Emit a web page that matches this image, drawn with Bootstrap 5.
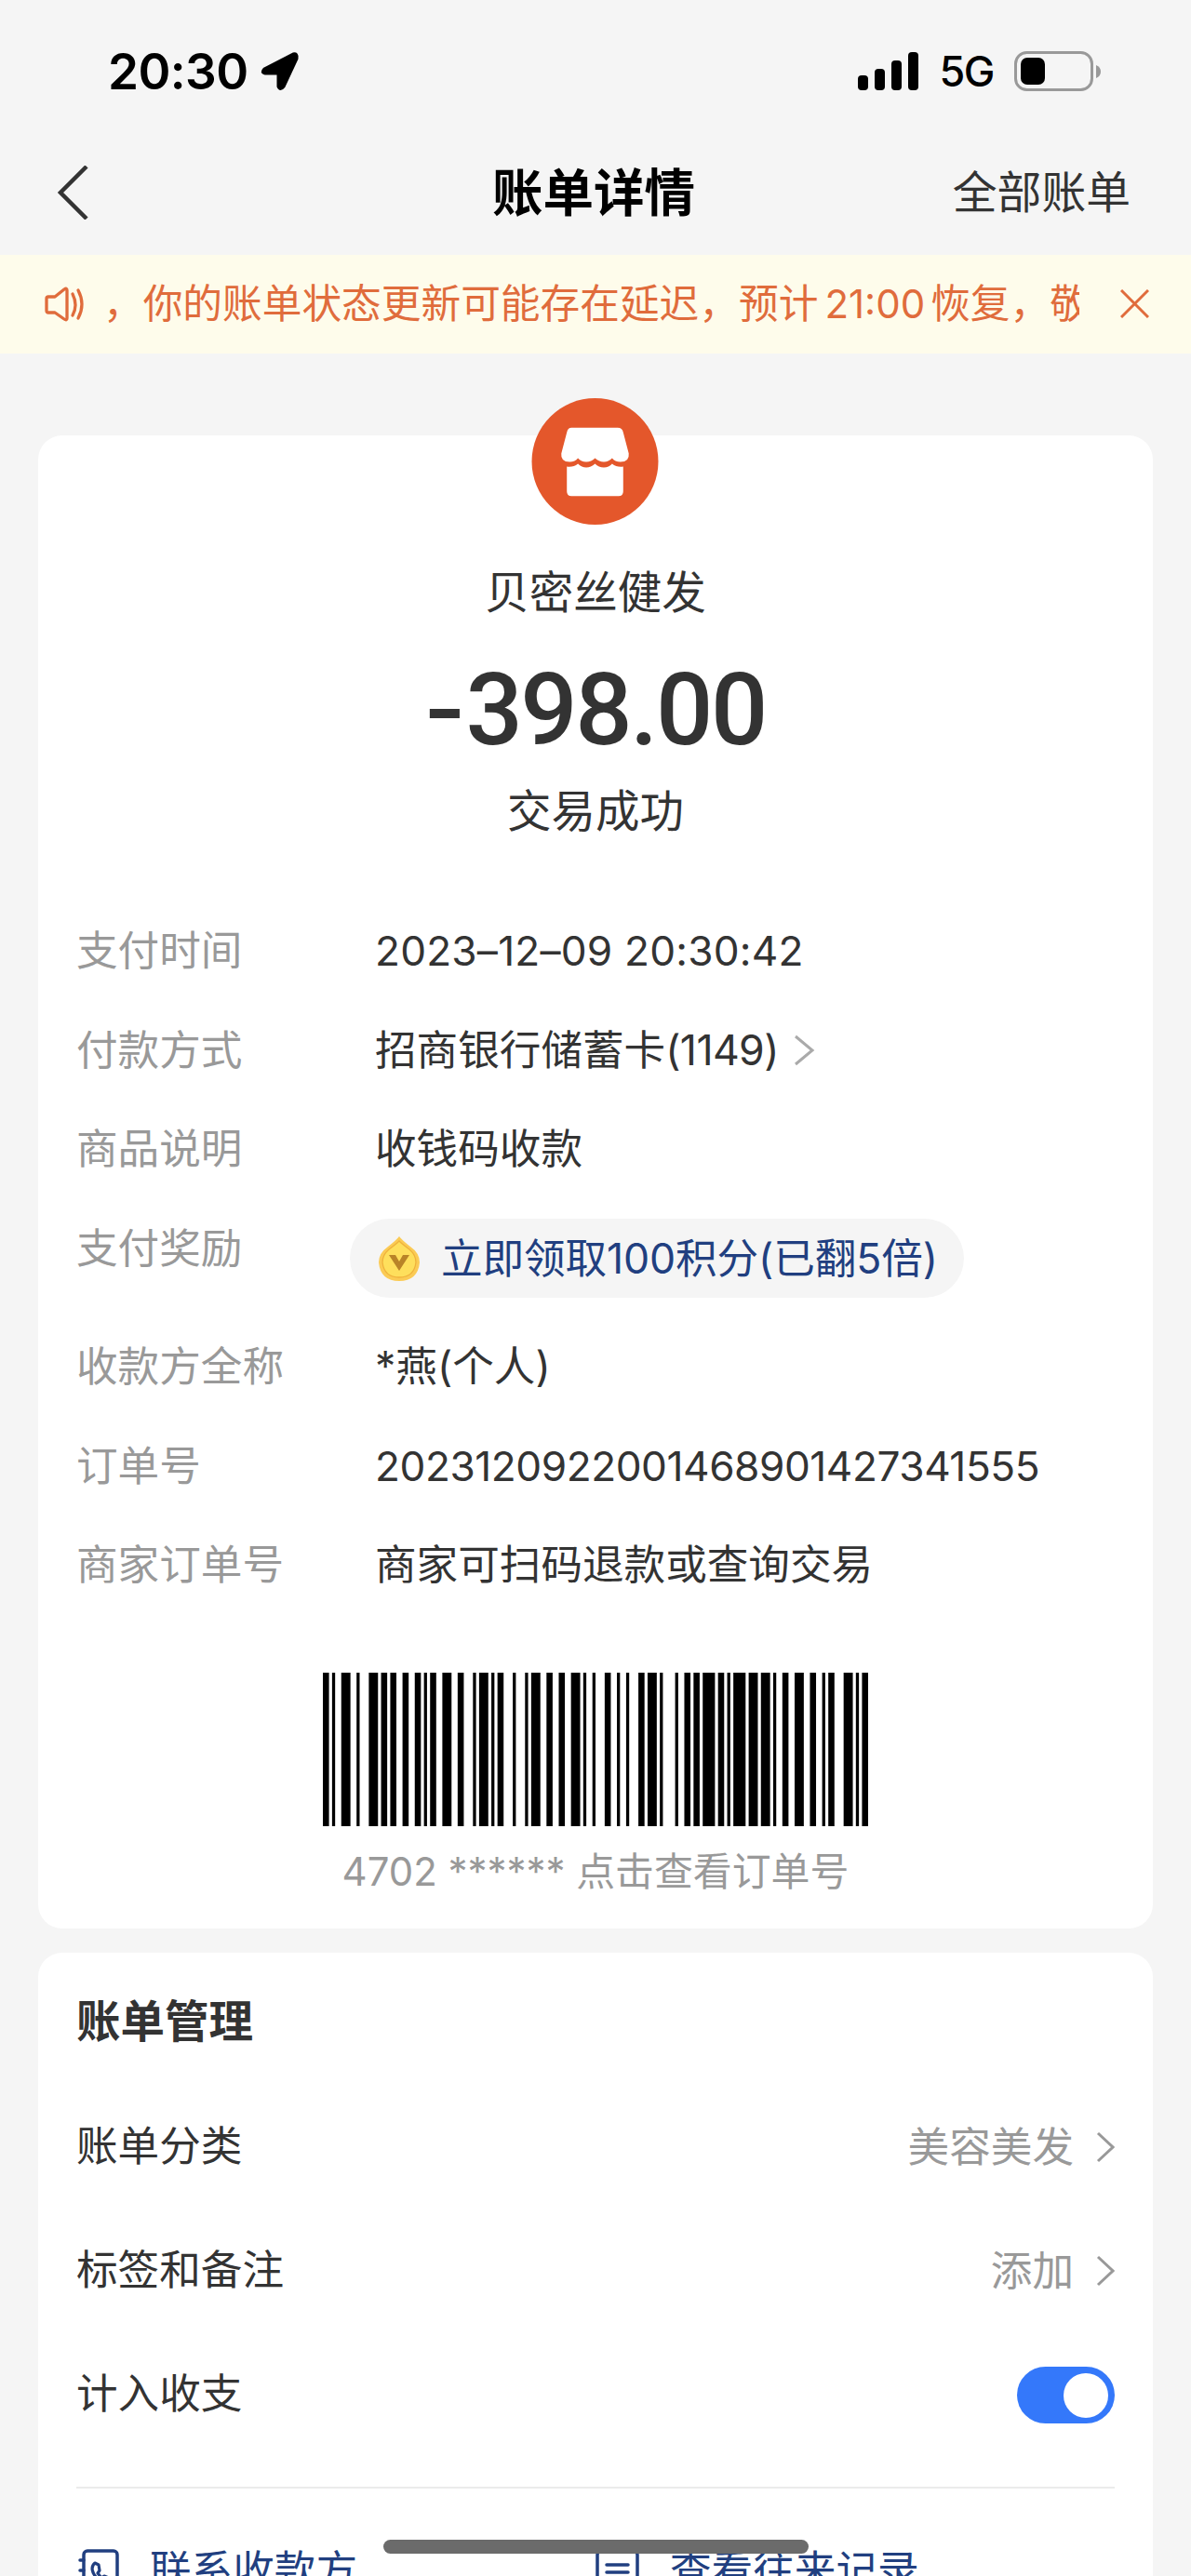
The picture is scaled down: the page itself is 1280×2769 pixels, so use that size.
<!DOCTYPE html>
<html lang="zh-CN">
<head>
<meta charset="utf-8">
<meta name="viewport" content="width=device-width, initial-scale=1">
<title>账单详情</title>
<link rel="stylesheet" href="https://cdn.jsdelivr.net/npm/bootstrap@5.3.0/dist/css/bootstrap.min.css">
<style>
  html, body { height: 2769px; overflow: hidden; }
  body { background: #f5f5f5; color: #333; font-family: Inter, "Noto Sans CJK SC", sans-serif; font-size: 44.6px; line-height: 60px; }
  svg { display: block; flex: none; }
  .screen { width: 1280px; height: 2769px; }
  .status-bar { height: 154px; padding: 0 97px 0 116px; color: #000; }
  .clock { font-size: 53px; font-weight: 600; letter-spacing: -.6px; }
  .locate { margin-left: 12px; }
  .carrier { font-size: 45px; font-weight: 500; letter-spacing: -1.5px; margin-left: 22px; }
  .battery { margin-left: 22px; }
  .title-bar { height: 120px; padding: 0 65px 15px 61px; }
  .title-bar > * { flex: 1 1 0; }
  .page-title { font-size: 54.5px; font-weight: 700; color: #000; }
  .all-bills { font-size: 47.8px; text-align: right; }
  .notice { height: 106px; background: #fefceb; color: #e06c3c; padding: 0 45px 1px 48px; font-size: 42.7px; }
  .notice-text { width: 1049px; white-space: nowrap; overflow: hidden; }
  .notice-text span { font-size: 42px; margin: 0 6px 0 7px; }
  .panel { margin: 0 41px; background: #fff; border-radius: 26px; }
  .bill { margin-top: 88px; height: 1605px; }
  .shop { margin: -40px 2px 0 0; }
  .merchant { font-size: 47.5px; margin-top: 43px; }
  .amount { font-family: Roboto, sans-serif; font-weight: 500; font-size: 108px; line-height: 120px; margin-top: 36px; letter-spacing: -2.4px; }
  .minus { display: inline-block; transform: scaleX(1.15); transform-origin: left; margin-right: 9px; }
  .state { font-size: 47.5px; margin-top: 19px; }
  .details { margin: 90px 0 0 41px; }
  .detail { height: 106.7px; }
  .detail dt { width: 321px; font-weight: 400; color: #999; }
  .detail dd { margin: 0; }
  .date-num { font-size: 44.2px; letter-spacing: .2px; }
  .order-num { font-size: 44.2px; letter-spacing: -.45px; }
  .card-tail { letter-spacing: -.6px; }
  .reward-row { height: 127px; }
  .detail .reward { height: 85px; margin: -2px 0 0 -27px; padding: 0 28px 0 31px; background: #f5f5f5; color: #213f80; border-radius: 43px; }
  .reward-label { margin-left: 23px; letter-spacing: -.1px; }
  .barcode { margin-top: 39px; }
  .barcode-text { font-size: 41.9px; color: #999; margin-top: 19px; }
  .manage { margin-top: 26px; height: 700px; padding: 44px 41px 0 41px; }
  .manage-title { font-size: 47.5px; font-weight: 700; margin: 0 0 37px; line-height: 60px; }
  .setting { height: 133.3px; }
  .setting-value { color: #999; padding-top: 3px; }
  .setting-value svg { margin-left: 24px; }
  .form-switch .form-check-input.count-switch { width: 105px; height: 61px; margin: 2px 0 0; border: 0; background-color: #3478fa; box-shadow: none; background-size: 64px; background-position: 42px -1px; }
  .links { border-top: 2px solid #ebebeb; margin-top: 33px; padding-top: 58px; color: #213f80; }
  .link-label { margin-left: 33px; white-space: nowrap; }
  .home-indicator { position: fixed; left: 412px; top: 2730px; width: 457px; height: 15px; border-radius: 8px; background: #6b6b6b; }
</style>
</head>
<body>
<div class="screen d-flex flex-column overflow-hidden">
  <header class="status-bar d-flex align-items-center justify-content-between flex-shrink-0">
    <div class="d-flex align-items-center">
      <span class="clock">20:30</span>
      <svg class="locate" width="44" height="44" viewBox="0 0 44 44"><path d="M5 19 36 3Q41 2 40 8L26 38Q22 43 20 38V24H6Q1 23 5 19Z" stroke="#000" stroke-width="3" stroke-linejoin="round"/></svg>
    </div>
    <div class="d-flex align-items-center">
      <svg width="66" height="42" viewBox="0 0 66 42"><rect y="25" width="11" height="16" rx="4"/><rect x="18" y="18" width="11" height="23" rx="4"/><rect x="36" y="9" width="11" height="32" rx="4"/><rect x="54" width="11" height="41" rx="4"/></svg>
      <span class="carrier">5G</span>
      <svg class="battery" width="93" height="44" viewBox="0 0 93 44"><rect x="1.500" y="1.500" width="82" height="40" rx="12" fill="none" stroke="#999" stroke-width="3"/><rect x="7" y="7" width="26" height="29" rx="7"/><path d="M88 15q5 2 5 7t-5 7z" fill="#999"/></svg>
    </div>
  </header>

  <nav class="title-bar d-flex align-items-center flex-shrink-0">
    <div><svg width="34" height="58" viewBox="0 0 34 58"><path d="M32 1 4 29 32 57" fill="none" stroke="#333" stroke-width="4.500"/></svg></div>
    <div class="page-title text-center text-nowrap">账单详情</div>
    <div class="all-bills">全部账单</div>
  </nav>

  <div class="notice d-flex align-items-center flex-shrink-0">
    <svg width="63" height="40" viewBox="0 0 63 40" fill="none" stroke="#e06c3c" stroke-width="3.300" stroke-linecap="round" stroke-linejoin="round"><path d="M4 12h7L21 4q3-2 3 1v30q0 3-3 1L11 29H4q-2 0-2-2V14q0-2 2-2z"/><path d="M30 9q6 12 0 23M36 5q8 15 0 30"/></svg>
    <div class="notice-text">，你的账单状态更新可能存在延迟，预计<span>21:00</span>恢复，敬</div>
    <svg class="ms-auto" width="31" height="31" viewBox="0 0 31 31"><path d="M1 1 30 30M30 1 1 30" stroke="#e06c3c" stroke-width="3"/></svg>
  </div>

  <main>
    <section class="panel bill d-flex flex-column">
      <svg class="shop align-self-center" width="137" height="136" viewBox="0 0 137 137"><circle cx="68.500" cy="68.500" r="68.500" fill="#e4572b"/><path fill="#fff" d="M44 32h49q5 0 6 5l6 23q1 9-9 9-6 0-9-4-4 4-9 4t-9.500-4q-4 4-9.500 4t-9-4q-3 4-9 4-10 0-9-9l6-23q1-5 5-5z"/><path fill="#fff" d="M38 74q7 1 12-3 4 4 9 4t9.500-4q4 4 9.500 4t9-4q5 4 12 3v27q0 5-5 5H43q-5 0-5-5z"/></svg>
      <div class="merchant text-center">贝密丝健发</div>
      <div class="amount text-center"><span class="minus">-</span>398.00</div>
      <div class="state text-center">交易成功</div>

      <dl class="details mb-0">
        <div class="detail d-flex"><dt>支付时间</dt><dd class="date-num">2023–12–09 20:30:42</dd></div>
        <div class="detail d-flex"><dt>付款方式</dt><dd class="d-flex align-items-center align-self-start">招商银行储蓄卡<span class="card-tail">(1149)</span><svg class="ms-3" width="23" height="34" viewBox="0 0 23 34"><path d="M2 2 20 17 2 32" fill="none" stroke="#aaa" stroke-width="3"/></svg></dd></div>
        <div class="detail d-flex"><dt>商品说明</dt><dd>收钱码收款</dd></div>
        <div class="detail reward-row d-flex"><dt>支付奖励</dt>
          <dd class="reward d-flex align-items-center">
            <svg width="44" height="50" viewBox="0 0 44 50"><path d="M22 1Q25 5 34 12 44 19 44 29 42 49 22 49 2 49 0 29 0 19 10 12 19 5 22 1z" fill="#fbcb55"/><path d="M22 6Q25 9 33 15 40 21 40 29 38 45 22 45 6 45 4 29 4 21 11 15 19 9 22 6z" fill="#fedf5c" stroke="#efb23c" stroke-width="1.300"/><path d="M11 21h7l4 7 4-7h7L22 38z" fill="#b98428"/></svg>
            <span class="reward-label">立即领取100积分(已翻5倍)</span>
          </dd></div>
        <div class="detail d-flex"><dt>收款方全称</dt><dd>*燕(个人)</dd></div>
        <div class="detail d-flex"><dt>订单号</dt><dd class="order-num">2023120922001468901427341555</dd></div>
        <div class="detail d-flex"><dt>商家订单号</dt><dd>商家可扫码退款或查询交易</dd></div>
      </dl>

      <svg id="barcode" class="barcode align-self-center" width="586" height="165" viewBox="0 0 178 10" preserveAspectRatio="none"><path/></svg>
      <div class="barcode-text text-center">4702 ****** 点击查看订单号</div>
    </section>

    <section class="panel manage">
      <h2 class="manage-title">账单管理</h2>
      <div class="setting d-flex align-items-center justify-content-between"><span>账单分类</span><span class="setting-value d-flex align-items-center">美容美发<svg width="20" height="34" viewBox="0 0 20 34"><path d="M2 2 18 17 2 32" fill="none" stroke="#999" stroke-width="3"/></svg></span></div>
      <div class="setting d-flex align-items-center justify-content-between"><span>标签和备注</span><span class="setting-value d-flex align-items-center">添加<svg width="20" height="34" viewBox="0 0 20 34"><path d="M2 2 18 17 2 32" fill="none" stroke="#999" stroke-width="3"/></svg></span></div>
      <div class="setting d-flex align-items-center justify-content-between"><span>计入收支</span><div class="form-check form-switch p-0 m-0 d-flex"><input class="form-check-input count-switch" type="checkbox" role="switch" checked aria-label="计入收支"></div></div>
      <div class="links row gx-0">
        <div class="col-6 d-flex align-items-center">
          <svg width="46" height="50" viewBox="0 0 46 50" fill="none" stroke="#213f80" stroke-width="3.500" stroke-linecap="round" stroke-linejoin="round"><rect x="8" y="4" width="36" height="44" rx="4"/><path d="M4 14h4M4 25h4M4 36h4"/><path d="M20 17c-5 4-3 11 2 16s10 7 14 3l-1-3-5-2-3 2-4-5 2-3-1-6z" stroke-width="3.200"/></svg>
          <span class="link-label">联系收款方</span>
        </div>
        <div class="col-6 d-flex align-items-center">
          <svg width="47" height="50" viewBox="0 0 47 50" fill="none" stroke="#213f80" stroke-width="3.500" stroke-linecap="round"><rect x="2" y="4" width="43" height="44" rx="4"/><path d="M12 19h23M12 27h23"/></svg>
          <span class="link-label">查看往来记录</span>
        </div>
      </div>
    </section>
  </main>
</div>
<div class="home-indicator"></div>
<script>
  // Bar and space widths, in modules, of each Code 128 symbol.
  const symbols = ['211232','133121','222221','112232','231131','112313','113222','223112','132212','132131','141221','214121','114131','311222','322211','2331112'];
  let x = 0, d = '';
  [...symbols.join('')].forEach((n, i) => { if (i % 2 === 0) d += `M${x} 0h${n}v10h-${n}z`; x += +n; });
  document.querySelector('#barcode path').setAttribute('d', d);
</script>
<script src="https://cdn.jsdelivr.net/npm/bootstrap@5.3.0/dist/js/bootstrap.bundle.min.js"></script>
</body>
</html>
